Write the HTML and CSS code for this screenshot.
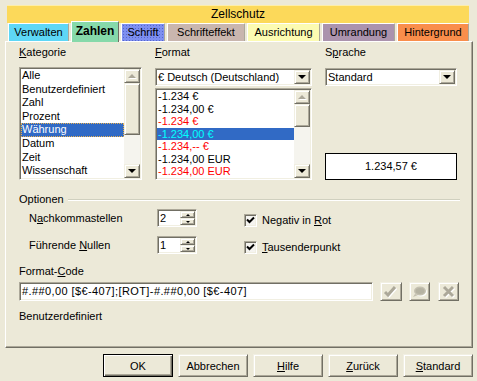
FILE: index.html
```html
<!DOCTYPE html>
<html>
<head>
    <title>Zellschutz</title>
    <link rel="stylesheet" href="styles.css">
</head>
<body>

<div class="dialog">
    <!-- Tab rows -->
    <div class="tab-back">Zellschutz</div>
    <div class="tab-row">
        <div class="tab tab-verwalten">Verwalten</div>
        <div class="tab tab-zahlen active">Zahlen</div>
        <div class="tab tab-schrift">Schrift</div>
        <div class="tab tab-effekt">Schrifteffekt</div>
        <div class="tab tab-ausrichtung">Ausrichtung</div>
        <div class="tab tab-umrandung">Umrandung</div>
        <div class="tab tab-hintergrund">Hintergrund</div>
    </div>

    <div class="tab-page">
        <!-- Kategorie / Format / Sprache -->
        <div class="top-grid">
            <div class="field-col">
                <div class="field-label"><u>K</u>ategorie</div>
                <div class="listbox list-kategorie">
                    <ul class="list-items">
                        <li>Alle</li>
                        <li>Benutzerdefiniert</li>
                        <li>Zahl</li>
                        <li>Prozent</li>
                        <li class="selected focused">Währung</li>
                        <li>Datum</li>
                        <li>Zeit</li>
                        <li>Wissenschaft</li>
                    </ul>
                    <div class="scrollbar">
                        <div class="sb-btn"><span class="arrow-up"></span></div>
                        <div class="sb-thumb"></div>
                        <div class="sb-track"></div>
                        <div class="sb-btn"><span class="arrow-down"></span></div>
                    </div>
                </div>
            </div>

            <div class="field-col">
                <div class="field-label"><u>F</u>ormat</div>
                <div class="dropdown">
                    <span class="dropdown-text">€ Deutsch (Deutschland)</span>
                    <span class="dropdown-btn"><span class="arrow-down"></span></span>
                </div>
                <div class="listbox list-format">
                    <ul class="list-items">
                        <li>-1.234 €</li>
                        <li>-1.234,00 €</li>
                        <li class="neg">-1.234 €</li>
                        <li class="selected neg-sel">-1.234,00 €</li>
                        <li class="neg">-1.234,-- €</li>
                        <li>-1.234,00 EUR</li>
                        <li class="neg">-1.234,00 EUR</li>
                    </ul>
                    <div class="scrollbar">
                        <div class="sb-btn"><span class="arrow-up"></span></div>
                        <div class="sb-thumb"></div>
                        <div class="sb-track"></div>
                        <div class="sb-btn"><span class="arrow-down"></span></div>
                    </div>
                </div>
            </div>

            <div class="field-col col-sprache">
                <div class="field-label">S<u>p</u>rache</div>
                <div class="dropdown">
                    <span class="dropdown-text">Standard</span>
                    <span class="dropdown-btn"><span class="arrow-down"></span></span>
                </div>
                <div class="preview">1.234,57 €</div>
            </div>
        </div>

        <!-- Optionen -->
        <div class="group-head">
            <span>Optionen</span>
            <span class="group-rule"></span>
        </div>
        <div class="options-grid">
            <div class="opt-label">N<u>a</u>chkommastellen</div>
            <div class="spin">
                <span class="spin-value">2</span>
                <span class="spin-btns">
                    <span class="spin-btn"><span class="tiny-up"></span></span>
                    <span class="spin-btn"><span class="tiny-down"></span></span>
                </span>
            </div>
            <div class="check-row">
                <span class="checkbox"><svg width="9" height="9" viewBox="0 0 9 9"><path d="M1 3.5 L3.5 6 L8 1.5" fill="none" stroke="#000" stroke-width="2"/></svg></span>
                <span>Negativ in <u>R</u>ot</span>
            </div>

            <div class="opt-label">Führende <u>N</u>ullen</div>
            <div class="spin">
                <span class="spin-value">1</span>
                <span class="spin-btns">
                    <span class="spin-btn"><span class="tiny-up"></span></span>
                    <span class="spin-btn"><span class="tiny-down"></span></span>
                </span>
            </div>
            <div class="check-row">
                <span class="checkbox"><svg width="9" height="9" viewBox="0 0 9 9"><path d="M1 3.5 L3.5 6 L8 1.5" fill="none" stroke="#000" stroke-width="2"/></svg></span>
                <span><u>T</u>ausenderpunkt</span>
            </div>
        </div>

        <!-- Format-Code -->
        <div class="field-label code-label">Format-<u>C</u>ode</div>
        <div class="code-row">
            <div class="code-input">#.##0,00 [$€-407];[ROT]-#.##0,00 [$€-407]</div>
            <div class="icon-btn btn-ok">
                <svg width="16" height="14" viewBox="0 0 16 14">
                    <path d="M3 8 L6 11 L13 3" fill="none" stroke="#fff" stroke-width="3"/>
                    <path d="M2 7 L5 10 L12 2" fill="none" stroke="#aca899" stroke-width="3"/>
                </svg>
            </div>
            <div class="icon-btn btn-comment">
                <svg width="16" height="14" viewBox="0 0 16 14">
                    <ellipse cx="9" cy="7" rx="6" ry="4.5" fill="#fff"/>
                    <ellipse cx="8" cy="6" rx="6" ry="4.5" fill="#c4c0b0"/>
                    <path d="M3 9 L1 12 L6 10 Z" fill="#c4c0b0"/>
                    <ellipse cx="8" cy="6" rx="4.5" ry="3" fill="#aca899" opacity="0.6"/>
                </svg>
            </div>
            <div class="icon-btn btn-cancel">
                <svg width="14" height="14" viewBox="0 0 14 14">
                    <path d="M3 3 L12 12 M12 3 L3 12" fill="none" stroke="#fff" stroke-width="3"/>
                    <path d="M2 2 L11 11 M11 2 L2 11" fill="none" stroke="#aca899" stroke-width="3"/>
                </svg>
            </div>
        </div>
        <div class="code-desc">Benutzerdefiniert</div>
    </div>

    <!-- Dialog buttons -->
    <div class="button-row">
        <button class="btn btn-default">OK</button>
        <button class="btn">Abbrechen</button>
        <button class="btn"><u>H</u>ilfe</button>
        <button class="btn"><u>Z</u>urück</button>
        <button class="btn"><u>S</u>tandard</button>
    </div>
</div>

</body>
</html>
```

FILE: styles.css
```css
body {
    margin: 0;
    background: #ece9d8;
    font-family: "Liberation Sans", Arial, sans-serif;
    font-size: 11px;
    color: #000;
}

u {
    text-decoration: underline;
    text-underline-offset: 1px;
}

.dialog {
    width: 468px;
    padding: 5px 0 0 5px;
}

/* Tabs */

.tab-back {
    margin: 0 4px 0 2px;
    height: 17px;
    line-height: 17px;
    background: #fcd95a;
    border-top: 1px solid #fdeeaa;
    text-align: center;
    font-size: 12px;
}

.tab-row {
    display: flex;
    align-items: flex-end;
    gap: 2px;
    height: 18px;
    margin-left: 3px;
}

.tab {
    box-sizing: border-box;
    height: 18px;
    line-height: 17px;
    border-top: 1px solid #fff;
    border-left: 1px solid #fff;
    border-right: 1px solid #aca899;
    text-align: center;
    font-size: 11px;
}

.tab.active {
    position: relative;
    z-index: 1;
    height: 21px;
    line-height: 19px;
    margin-bottom: -1px;
    font-size: 12px;
    font-weight: bold;
    border-right-color: #716f64;
}

.tab-verwalten { width: 61px; background: #5ed7f6; }
.tab-zahlen { width: 48px; background: #86d9aa; }
.tab-schrift {
    width: 44px;
    background-color: #7e8ff0;
    background-image: radial-gradient(#5566cc 0.6px, transparent 0.8px);
    background-size: 3px 3px;
}
.tab-effekt { width: 78px; background: #c9b6ae; }
.tab-ausrichtung { width: 73px; background: #fcfbb2; }
.tab-umrandung { width: 73px; background: #ab93ad; }
.tab-hintergrund { width: 72px; background: #f98e4b; }

.tab-page {
    box-sizing: border-box;
    width: 468px;
    height: 307px;
    padding: 4px 12px 0 13px;
    border: 1px solid;
    border-color: #fff #716f64 #716f64 #fff;
    box-shadow: inset -1px -1px #aca899;
}

/* Top area */

.top-grid {
    display: grid;
    grid-template-columns: 123px 157px 132px;
    column-gap: 13px;
}

.field-col {
    display: flex;
    flex-direction: column;
}

.field-label {
    height: 13px;
    line-height: 13px;
}

.listbox,
.dropdown,
.spin,
.code-input {
    box-sizing: border-box;
    background: #fff;
    border: 1px solid;
    border-color: #aca899 #fff #fff #aca899;
    box-shadow: inset 1px 1px #716f64, inset -1px -1px #f1efe2;
    padding: 1px;
}

.listbox {
    display: flex;
}

.list-kategorie {
    margin-top: 8px;
    height: 113px;
}

.list-format {
    margin-top: 2px;
    height: 92px;
}

.list-items {
    flex: 1;
    list-style: none;
    margin: 0;
    padding: 0;
    overflow: hidden;
    white-space: nowrap;
}

.list-kategorie li {
    height: 13.6px;
    line-height: 13px;
    padding-left: 1px;
}

.list-format li {
    height: 12.5px;
    line-height: 12px;
    padding-left: 1px;
}

.list-items .neg {
    color: #f00;
}

.list-items .selected {
    background: #316ac5;
    color: #fff;
}

.list-items .focused {
    box-sizing: border-box;
    border: 1px dotted #e8b050;
    line-height: 11px;
    padding-left: 0;
}

.list-items .neg-sel {
    color: #0ff;
}

.scrollbar {
    width: 16px;
    display: flex;
    flex-direction: column;
}

.sb-btn,
.sb-thumb,
.dropdown-btn,
.spin-btn,
.icon-btn,
.btn {
    box-sizing: border-box;
    background: #ece9d8;
    border: 1px solid;
    border-color: #f1efe2 #716f64 #716f64 #f1efe2;
    box-shadow: inset 1px 1px #fff, inset -1px -1px #aca899;
}

.sb-btn {
    height: 14px;
    display: flex;
    align-items: center;
    justify-content: center;
}

.list-kategorie .sb-thumb { height: 52px; }
.list-format .sb-thumb { height: 23px; }

.sb-track {
    flex: 1;
    background: #f5f4ee;
}

.arrow-down,
.arrow-up {
    width: 0;
    height: 0;
    border-left: 4px solid transparent;
    border-right: 4px solid transparent;
}

.arrow-down {
    border-top: 4px solid #000;
}

/* the up arrows are disabled here */
.arrow-up {
    border-bottom: 4px solid #aca899;
    filter: drop-shadow(1px 1px 0 #fff);
}

/* Dropdowns */

.dropdown {
    margin-top: 9px;
    height: 18px;
    display: flex;
    align-items: center;
}

.dropdown-text {
    flex: 1;
    padding-left: 1px;
    white-space: nowrap;
}

.dropdown-btn {
    width: 16px;
    height: 14px;
    display: flex;
    align-items: center;
    justify-content: center;
}

.preview {
    margin-top: auto;
    box-sizing: border-box;
    height: 27px;
    line-height: 25px;
    border: 1px solid #000;
    background: #fff;
    text-align: center;
}

/* Optionen */

.group-head {
    display: flex;
    align-items: center;
    margin-top: 13px;
    height: 13px;
    line-height: 13px;
}

.group-rule {
    flex: 1;
    margin-left: 4px;
    border-top: 1px solid #d0d0bf;
    border-bottom: 1px solid #fff;
}

.options-grid {
    display: grid;
    grid-template-columns: 128px 40px 1fr;
    grid-auto-rows: 18px;
    row-gap: 9px;
    margin-top: 3px;
    padding-left: 10px;
    align-items: center;
}

.spin {
    height: 18px;
    display: flex;
}

.spin-value {
    flex: 1;
    line-height: 14px;
    padding-left: 1px;
}

.spin-btns {
    width: 15px;
    display: flex;
    flex-direction: column;
}

.spin-btn {
    flex: 1;
    display: flex;
    align-items: center;
    justify-content: center;
}

.tiny-up,
.tiny-down {
    width: 0;
    height: 0;
    border-left: 2px solid transparent;
    border-right: 2px solid transparent;
}

.tiny-up { border-bottom: 2px solid #000; }
.tiny-down { border-top: 2px solid #000; }

.check-row {
    display: flex;
    align-items: center;
    gap: 5px;
    padding: 4px 0 0 47px;
    height: 18px;
    box-sizing: border-box;
}

.checkbox {
    box-sizing: border-box;
    width: 13px;
    height: 13px;
    background: #f5f4f0;
    border: 1px solid;
    border-color: #aca899 #fff #fff #aca899;
    box-shadow: inset 1px 1px #716f64, inset -1px -1px #f1efe2;
    display: flex;
    align-items: center;
    justify-content: center;
}

/* Format-Code */

.code-label {
    margin-top: 11px;
}

.code-row {
    display: flex;
    margin-top: 4px;
    height: 19px;
}

.code-input {
    width: 354px;
    line-height: 15px;
    padding-left: 2px;
    letter-spacing: 0.4px;
    white-space: nowrap;
    overflow: hidden;
}

.icon-btn {
    display: flex;
    align-items: center;
    justify-content: center;
}

.btn-ok { width: 22px; margin-left: 7px; }
.btn-comment { width: 21px; margin-left: 7px; }
.btn-cancel { width: 21px; margin-left: 8px; }

.code-desc {
    margin-top: 9px;
    line-height: 13px;
}

/* Dialog buttons */

.button-row {
    display: flex;
    justify-content: flex-end;
    gap: 5px;
    margin-top: 6px;
}

.btn {
    width: 70px;
    height: 23px;
    padding: 0;
    font-family: inherit;
    font-size: 11px;
    color: #000;
}

.btn-default {
    border-color: #000;
    box-shadow: inset 1px 1px #fff, inset -1px -1px #716f64, inset -2px -2px #aca899;
}
```
